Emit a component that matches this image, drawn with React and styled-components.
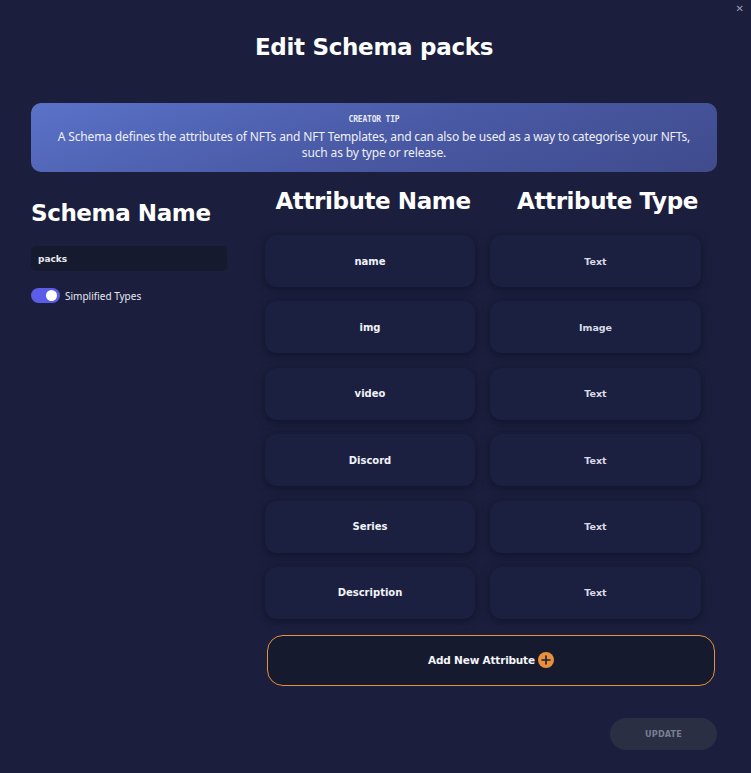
import React from "react";
import styled, { createGlobalStyle } from "styled-components";

const Global = createGlobalStyle`
  html, body { margin: 0; padding: 0; background: #1b1f3d; }
  body { font-family: "DejaVu Sans", "Noto Sans", sans-serif; color: #fff; }
  * { box-sizing: border-box; }
`;

const Modal = styled.div`
  position: relative;
  width: 751px;
  min-height: 773px;
  background: #1b1f3d;
  padding: 31px 34px 23px 31px;
  display: flex;
  flex-direction: column;
`;

const Close = styled.button`
  position: absolute;
  top: 3px;
  right: 7px;
  background: none;
  border: none;
  color: #9a9db0;
  font-family: "DejaVu Sans", sans-serif;
  font-size: 10px;
  padding: 0;
  cursor: pointer;
`;

const Title = styled.h1`
  margin: 0;
  text-align: center;
  font-family: "DejaVu Sans", sans-serif;
  font-weight: 700;
  font-size: 23px;
  letter-spacing: -0.3px;
  line-height: 32px;
`;

const Tip = styled.div`
  margin-top: 40px;
  height: 69px;
  border-radius: 10px;
  background: linear-gradient(160deg, #5a72c8 0%, #4a5aa6 50%, #3f4b8c 100%);
  display: flex;
  flex-direction: column;
  align-items: center;
  padding-top: 11px;
`;

const TipLabel = styled.div`
  font-family: "DejaVu Sans Mono", "Liberation Mono", monospace;
  font-weight: 700;
  font-size: 8px;
  letter-spacing: -0.2px;
  color: #e6e9f5;
  line-height: 12px;
`;

const TipText = styled.p`
  margin: 3px 0 0;
  text-align: center;
  font-family: "Noto Sans", sans-serif;
  font-size: 12px;
  line-height: 16px;
  letter-spacing: -0.15px;
  color: #eef0f8;
  max-width: 650px;
`;

const Body = styled.div`
  display: flex;
  margin-top: 12px;
`;

const LeftCol = styled.div`
  width: 196px;
  display: flex;
  flex-direction: column;
`;

const SectionHeading = styled.h2`
  margin: ${(p) => p.$top}px 0 0;
  padding-left: ${(p) => p.$shift || 0}px;
  font-family: "DejaVu Sans", sans-serif;
  font-weight: 700;
  font-size: 23px;
  letter-spacing: -0.4px;
  line-height: 30px;
  text-align: ${(p) => (p.$center ? "center" : "left")};
  color: #fff;
  white-space: nowrap;
`;

const Input = styled.div`
  margin-top: 18px;
  height: 25px;
  border-radius: 5px;
  background: #151a2f;
  display: flex;
  align-items: center;
  padding-left: 7px;
  font-family: "DejaVu Sans", sans-serif;
  font-weight: 700;
  font-size: 9px;
  color: #e8e9ef;
`;

const ToggleRow = styled.label`
  margin-top: 17px;
  display: flex;
  align-items: center;
  gap: 5px;
  font-family: "Noto Sans", sans-serif;
  font-size: 10px;
  color: #e8e9f2;
`;

const Switch = styled.span`
  position: relative;
  width: 29px;
  height: 15px;
  border-radius: 8px;
  background: #5b5ce8;
  &::after {
    content: "";
    position: absolute;
    top: 2px;
    right: 3px;
    width: 11px;
    height: 11px;
    border-radius: 50%;
    background: #fff;
  }
`;

const RightCol = styled.div`
  margin-left: 38px;
  width: 450px;
  display: flex;
  flex-direction: column;
`;

const Grid = styled.div`
  display: grid;
  grid-template-columns: 210px 211px;
  column-gap: 15px;
  row-gap: 14.4px;
`;

const Card = styled.div`
  height: 52px;
  border-radius: 12px;
  background: #1c2040;
  box-shadow: 0 2px 8px rgba(8, 10, 28, 0.55);
  display: flex;
  align-items: center;
  justify-content: center;
  font-family: "DejaVu Sans", sans-serif;
  font-weight: 700;
  font-size: ${(p) => (p.$type ? "9.5px" : "10px")};
  color: ${(p) => (p.$type ? "#d9dbe6" : "#f2f3f8")};
`;

const HeaderRow = styled.div`
  display: grid;
  grid-template-columns: 210px 211px;
  column-gap: 15px;
  margin-bottom: 19px;
`;

const AddButton = styled.button`
  margin: 16px 0 0 2px;
  width: 448px;
  height: 51px;
  border-radius: 16px;
  border: 1px solid #e8913a;
  background: #151a2f;
  display: flex;
  align-items: center;
  justify-content: center;
  gap: 3px;
  font-family: "DejaVu Sans", sans-serif;
  font-weight: 700;
  font-size: 10.5px;
  letter-spacing: -0.2px;
  color: #f4f4f8;
  cursor: pointer;
`;

const PlusCircle = styled.span`
  width: 16px;
  height: 16px;
  border-radius: 50%;
  background: #e8913a;
  display: inline-flex;
  align-items: center;
  justify-content: center;
`;

const Footer = styled.div`
  display: flex;
  justify-content: flex-end;
  margin-top: 32px;
`;

const UpdateButton = styled.button`
  width: 107px;
  height: 32px;
  border-radius: 16px;
  border: none;
  background: #2a2f44;
  color: #7a7e93;
  font-family: "DejaVu Sans Condensed", "DejaVu Sans", sans-serif;
  font-stretch: condensed;
  font-weight: 700;
  font-size: 9px;
  letter-spacing: 0.2px;
  cursor: default;
`;

const rows = [
  ["name", "Text"],
  ["img", "Image"],
  ["video", "Text"],
  ["Discord", "Text"],
  ["Series", "Text"],
  ["Description", "Text"],
];

export default function App() {
  return (
    <>
      <Global />
      <Modal>
        <Close aria-label="close">✕</Close>
        <Title>Edit Schema packs</Title>
        <Tip>
          <TipLabel>CREATOR TIP</TipLabel>
          <TipText>
            A Schema defines the attributes of NFTs and NFT Templates, and can also be used as a way to categorise your NFTs, such as by type or release.
          </TipText>
        </Tip>
        <Body>
          <LeftCol>
            <SectionHeading $top={14}>Schema Name</SectionHeading>
            <Input>packs</Input>
            <ToggleRow>
              <Switch />
              Simplified Types
            </ToggleRow>
          </LeftCol>
          <RightCol>
            <HeaderRow>
              <SectionHeading $top={2} $center $shift={6}>Attribute Name</SectionHeading>
              <SectionHeading $top={2} $center $shift={24}>Attribute Type</SectionHeading>
            </HeaderRow>
            <Grid>
              {rows.map(([n, t]) => (
                <React.Fragment key={n}>
                  <Card>{n}</Card>
                  <Card $type>{t}</Card>
                </React.Fragment>
              ))}
            </Grid>
            <AddButton>
              Add New Attribute
              <PlusCircle>
                <svg width="10" height="10" viewBox="0 0 10 10">
                  <path d="M5 1v8M1 5h8" stroke="#1b1f3d" strokeWidth="1.6" strokeLinecap="round" />
                </svg>
              </PlusCircle>
            </AddButton>
          </RightCol>
        </Body>
        <Footer>
          <UpdateButton>UPDATE</UpdateButton>
        </Footer>
      </Modal>
    </>
  );
}
